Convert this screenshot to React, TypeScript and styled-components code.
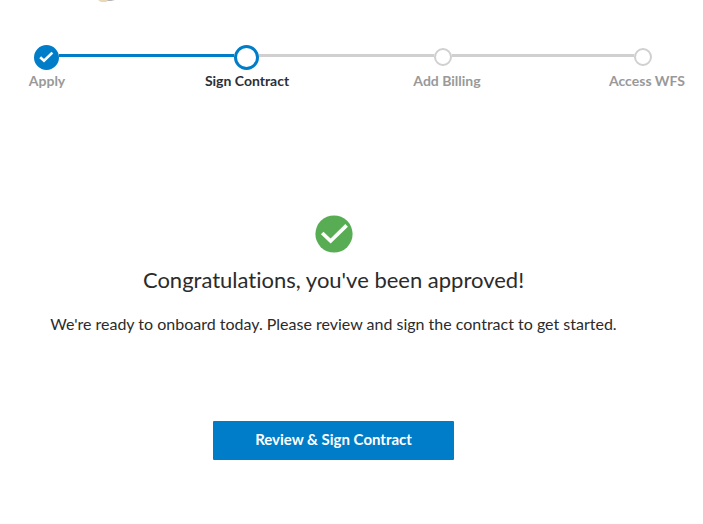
import React from 'react';
import styled, { createGlobalStyle } from 'styled-components';

const BLUE = '#007dc8';
const GREY = '#d0d0d0';

const GlobalStyle = createGlobalStyle`
  *, *::before, *::after { box-sizing: border-box; }
  body {
    margin: 0;
    background: #fff;
    color: #2b2b2b;
    font-family: Lato, "Open Sans", sans-serif;
    font-variant-ligatures: none;
  }
`;

const Header = styled.header`
  height: 44px;
  padding-left: 98px;
`;

const LogoEdge = styled.svg`
  display: block;
`;

const Progress = styled.ol`
  display: flex;
  align-items: flex-start;
  margin: 0;
  padding: 0 43px 0 34px;
  list-style: none;
`;

const Step = styled.li`
  display: flex;
  flex-direction: column;
  align-items: center;
  width: 26px;
`;

const MarkerSlot = styled.span`
  display: flex;
  align-items: center;
  width: 100%;
  height: 26px;
`;

type State = 'done' | 'current' | 'upcoming';

const Marker = styled.span<{ $state: State }>`
  display: flex;
  align-items: center;
  justify-content: center;
  width: ${({ $state }) => ($state === 'upcoming' ? 18 : 25)}px;
  height: ${({ $state }) => ($state === 'upcoming' ? 18 : 25)}px;
  border-radius: 50%;
  border: ${({ $state }) => ($state === 'upcoming' ? `2px solid ${GREY}` : `3px solid ${BLUE}`)};
  background: ${({ $state }) => ($state === 'done' ? BLUE : '#fff')};
`;

const StepLabel = styled.span<{ $state: State }>`
  margin-top: 2px;
  font-size: 14px;
  line-height: 18px;
  font-weight: 700;
  white-space: nowrap;
  color: ${({ $state }) => ($state === 'current' ? '#2b3038' : '#999')};
`;

const Connector = styled.li<{ $active?: boolean; $afterSmall?: boolean }>`
  flex: 1;
  padding-top: 10px;

  &::before {
    content: '';
    display: block;
    height: 3px;
    margin-left: ${({ $afterSmall }) => ($afterSmall ? -8 : -1)}px;
    background: ${({ $active }) => ($active ? BLUE : GREY)};
  }
`;

const Main = styled.main`
  display: flex;
  flex-direction: column;
  align-items: center;
  padding: 125px 36px 40px 0;
  text-align: center;
`;

const Title = styled.h1`
  margin: 13px 0 0;
  font-size: 22px;
  line-height: 28px;
  font-weight: 400;
`;

const Copy = styled.p`
  margin: 20px 0 0;
  font-size: 16px;
  line-height: 20px;
`;

const SignButton = styled.button`
  margin-top: 87px;
  padding: 9px 40px 11px;
  min-width: 241px;
  border: 0;
  border-radius: 1px;
  background: ${BLUE};
  color: #fff;
  font-family: inherit;
  font-size: 15px;
  line-height: 19px;
  font-weight: 700;
  cursor: pointer;
`;

const steps: { label: string; state: State }[] = [
  { label: 'Apply', state: 'done' },
  { label: 'Sign Contract', state: 'current' },
  { label: 'Add Billing', state: 'upcoming' },
  { label: 'Access WFS', state: 'upcoming' },
];

export default function App() {
  return (
    <>
      <GlobalStyle />
      <Header>
        <LogoEdge width="18" height="3" viewBox="0 0 18 3" aria-hidden="true">
          <path d="M0 0h11L8 2H3Z" fill="#e6d8b8" />
          <path d="M10 0h7l-4 1H9Z" fill="#b5b5b8" />
        </LogoEdge>
      </Header>
      <Progress aria-label="Progress">
        {steps.map(({ label, state }, i) => (
          <React.Fragment key={label}>
            {i > 0 && (
              <Connector
                aria-hidden="true"
                $active={steps[i - 1].state === 'done'}
                $afterSmall={steps[i - 1].state === 'upcoming'}
              />
            )}
            <Step aria-current={state === 'current' ? 'step' : undefined}>
              <MarkerSlot>
                <Marker $state={state}>
                  {state === 'done' && (
                    <svg width="15" height="12" viewBox="0 0 15 12" aria-hidden="true">
                      <path d="M1.2 6.2l3.8 3.6 8.4-8.2" fill="none" stroke="#fff" strokeWidth="2.6" />
                    </svg>
                  )}
                </Marker>
              </MarkerSlot>
              <StepLabel $state={state}>{label}</StepLabel>
            </Step>
          </React.Fragment>
        ))}
      </Progress>
      <Main>
        <svg width="38" height="38" viewBox="0 0 38 38" aria-hidden="true">
          <circle cx="19" cy="19" r="18.6" fill="#58ad54" />
          <path d="M7.2 18l8.4 8L31.6 10.4" fill="none" stroke="#fff" strokeWidth="3.7" />
        </svg>
        <Title>Congratulations, you've been approved!</Title>
        <Copy>We're ready to onboard today. Please review and sign the contract to get started.</Copy>
        <SignButton type="button">Review &amp; Sign Contract</SignButton>
      </Main>
    </>
  );
}
